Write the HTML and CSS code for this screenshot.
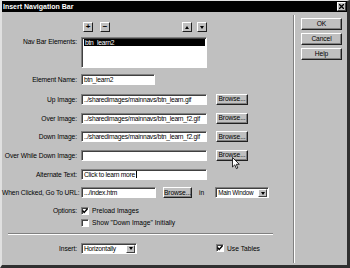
FILE: index.html
```html
<!DOCTYPE html>
<html lang="en">
  <head>
    <meta charset="UTF-8" />
    <meta name="viewport" content="width=device-width, initial-scale=1.0" />
    <title>Insert Navigation Bar</title>
    <link rel="stylesheet" href="styles.css">
  </head>
  <body>
    <div class="window">
      <div class="titlebar">
        <span class="title">Insert Navigation Bar</span>
        <button class="close">
          <svg width="5" height="5" viewBox="0 0 5 5"><path d="M0 0L5 5M5 0L0 5" stroke="#000" stroke-width="1.3"/></svg>
        </button>
      </div>
      <div class="content">
        <div class="main">
          <div class="tools">
            <div class="tool-group">
              <button class="tool">+</button>
              <button class="tool">&minus;</button>
            </div>
            <div class="tool-group arrows">
              <button class="tool"><span class="tri-up"></span></button>
              <button class="tool"><span class="tri-down"></span></button>
            </div>
          </div>

          <div class="field list-field">
            <label class="label">Nav Bar Elements:</label>
            <div class="list">
              <div class="item selected">btn_learn2</div>
            </div>
          </div>

          <div class="field first">
            <label class="label">Element Name:</label>
            <div class="input short">btn_learn2</div>
          </div>
          <div class="field">
            <label class="label">Up Image:</label>
            <div class="input">../sharedimages/mainnavs/btn_learn.gif</div>
            <button class="btn browse">Browse...</button>
          </div>
          <div class="field">
            <label class="label">Over Image:</label>
            <div class="input">../sharedimages/mainnavs/btn_learn_f2.gif</div>
            <button class="btn browse">Browse...</button>
          </div>
          <div class="field">
            <label class="label">Down Image:</label>
            <div class="input">../sharedimages/mainnavs/btn_learn_f2.gif</div>
            <button class="btn browse">Browse...</button>
          </div>
          <div class="field">
            <label class="label">Over While Down Image:</label>
            <div class="input"></div>
            <button class="btn browse">Browse...</button>
          </div>
          <div class="field">
            <label class="label">Alternate Text:</label>
            <div class="input">Click to learn more<span class="caret"></span></div>
          </div>
          <div class="field">
            <label class="label">When Clicked, Go To URL:</label>
            <div class="input url">.../index.htm</div>
            <button class="btn browse small">Browse...</button>
            <span class="in">in</span>
            <div class="select window-select">Main Window<span class="drop"><span class="tri-down"></span></span></div>
          </div>

          <div class="field options">
            <label class="label">Options:</label>
            <div class="check-row">
              <span class="checkbox checked">
                <svg width="6" height="6" viewBox="0 0 6 6"><path d="M0.5 2.5L2.2 4.5L5.5 0.8" stroke="#000" stroke-width="1.4" fill="none"/></svg>
              </span>
              Preload Images
            </div>
          </div>
          <div class="field options second">
            <span class="label"></span>
            <div class="check-row">
              <span class="checkbox"></span>
              Show "Down Image" Initially
            </div>
          </div>

          <div class="separator"></div>

          <div class="field insert">
            <label class="label">Insert:</label>
            <div class="select insert-select">Horizontally<span class="drop"><span class="tri-down"></span></span></div>
            <div class="check-row tables">
              <span class="checkbox checked">
                <svg width="6" height="6" viewBox="0 0 6 6"><path d="M0.5 2.5L2.2 4.5L5.5 0.8" stroke="#000" stroke-width="1.4" fill="none"/></svg>
              </span>
              Use Tables
            </div>
          </div>
        </div>

        <div class="actions">
          <button class="btn action">OK</button>
          <button class="btn action">Cancel</button>
          <button class="btn action">Help</button>
        </div>
      </div>

      <svg class="pointer" width="8" height="13" viewBox="0 0 8 13">
        <path d="M0.5 0.5L0.5 10L2.8 7.8L4.4 11.6L5.8 11L4.3 7.3L7.3 7.3Z" fill="#fff" stroke="#000" stroke-width="0.8"/>
      </svg>
    </div>
  </body>
</html>
```

FILE: styles.css
```css
* {
  box-sizing: border-box;
}
body {
  margin: 0;
  background-color: #c0c0c0;
  font-family: "Liberation Sans", Arial, sans-serif;
  font-size: 6.7px;
  color: #000;
}
button {
  font-family: inherit;
  font-size: inherit;
  color: #000;
  padding: 0;
  cursor: default;
}

.window {
  position: relative;
  width: 350px;
  height: 268px;
  display: flex;
  flex-direction: column;
  background-color: #c0c0c0;
  border-style: solid;
  border-width: 1px 3px 3px 2px;
  border-color: #e0e0e0 #303030 #303030 #e0e0e0;
}

.titlebar {
  height: 11px;
  display: flex;
  align-items: center;
  justify-content: space-between;
  padding: 0 1px;
  background-color: #000;
  color: #fff;
}
.title {
  font-size: 7px;
  font-weight: bold;
}
.close {
  width: 9px;
  height: 9px;
  display: flex;
  align-items: center;
  justify-content: center;
  background-color: #c0c0c0;
  border: 1px solid;
  border-color: #fff #404040 #404040 #fff;
}

.content {
  flex: 1;
  display: flex;
}
.main {
  flex: 1;
  padding-top: 10px;
}
.actions {
  width: 54px;
  margin: 3px 0 2px;
  padding: 3px 0 0 7px;
  display: flex;
  flex-direction: column;
  gap: 3px;
  border-left: 1px solid #808080;
  box-shadow: inset 1px 0 #fff;
}

/* raised buttons */
.btn {
  height: 11px;
  background-color: #c0c0c0;
  border: 1px solid;
  border-color: #fff #202020 #202020 #fff;
  box-shadow: inset -1px -1px #808080;
  line-height: 1;
  letter-spacing: -0.1px;
}
.action {
  width: 41px;
  height: 12px;
}
.browse {
  width: 32px;
  margin-left: 9px;
}
.browse.small {
  width: 29px;
  margin-left: 7px;
}

/* list tools */
.tools {
  margin-left: 79px;
  width: 126px;
  height: 10px;
  display: flex;
  justify-content: space-between;
  padding-left: 2px;
}
.tool-group {
  display: flex;
  gap: 7px;
}
.arrows {
  gap: 5px;
}
.tool {
  width: 10px;
  height: 10px;
  display: flex;
  align-items: center;
  justify-content: center;
  background-color: #c0c0c0;
  border: 1px solid;
  border-color: #fff #202020 #202020 #fff;
  font-weight: bold;
  font-size: 8px;
  line-height: 1;
}
.tri-up,
.tri-down {
  width: 0;
  height: 0;
  border-left: 2.5px solid transparent;
  border-right: 2.5px solid transparent;
}
.tri-up {
  border-bottom: 3px solid #000;
}
.tri-down {
  border-top: 3px solid #000;
}

/* rows */
.field {
  display: flex;
  align-items: center;
  height: 11px;
  margin-top: 7.7px;
}
.label {
  width: 75px;
  margin-right: 4px;
  text-align: right;
  white-space: nowrap;
  flex-shrink: 0;
  letter-spacing: -0.1px;
}
.list-field {
  height: 31px;
  margin-top: 5px;
  align-items: flex-start;
}
.list-field .label {
  padding-top: 1px;
}
.first {
  margin-top: 6px;
}
.first + .field {
  margin-top: 9px;
}

.input,
.list,
.select,
.checkbox {
  background-color: #fff;
  border: 1px solid;
  border-color: #808080 #fff #fff #808080;
  box-shadow: inset 1px 1px #404040;
}
.input,
.select,
.list {
  letter-spacing: -0.25px;
}
.input {
  width: 126px;
  height: 11px;
  padding: 0 2px;
  line-height: 9px;
  white-space: nowrap;
  overflow: hidden;
}
.input.short {
  width: 74px;
}
.input.url {
  width: 75px;
}
.caret {
  display: inline-block;
  width: 1px;
  height: 7px;
  margin-left: 0.5px;
  vertical-align: -1px;
  background-color: #000;
}

.list {
  width: 126px;
  height: 31px;
  padding: 1px 2px;
}
.item {
  height: 7px;
  line-height: 7px;
  padding-left: 1px;
}
.selected {
  background-color: #000;
  color: #fff;
  margin-right: -1px;
}

.in {
  margin-left: 7px;
}
.select {
  position: relative;
  height: 11px;
  padding: 0 2px;
  line-height: 9px;
  white-space: nowrap;
}
.window-select {
  width: 54px;
  margin-left: 11px;
  font-size: 6.3px;
}
.insert-select {
  width: 56px;
}
.drop {
  position: absolute;
  right: 1px;
  top: 1px;
  width: 9px;
  height: 8px;
  display: flex;
  align-items: center;
  justify-content: center;
  background-color: #c0c0c0;
  border: 1px solid;
  border-color: #fff #404040 #404040 #fff;
}

.options {
  height: 8px;
  margin-top: 8.5px;
}
.options.second {
  margin-top: 4px;
}
.check-row {
  display: flex;
  align-items: center;
  gap: 3px;
  white-space: nowrap;
}
.checkbox {
  width: 8px;
  height: 8px;
  display: flex;
  align-items: center;
  justify-content: center;
}

.separator {
  height: 2px;
  margin: 6px 20px 0 6px;
  border-top: 1px solid #808080;
  border-bottom: 1px solid #fff;
}

.insert {
  margin-top: 8px;
}
.tables {
  margin-left: 79px;
}

.pointer {
  position: absolute;
  left: 230px;
  top: 156px;
}
```
